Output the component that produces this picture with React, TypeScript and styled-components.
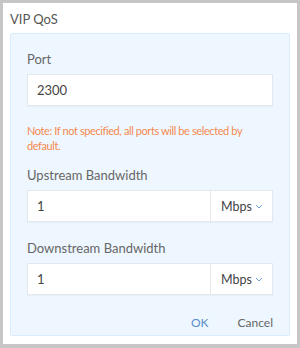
import React from 'react';
import styled, { createGlobalStyle } from 'styled-components';

const Global = createGlobalStyle`
  html, body {
    margin: 0;
    padding: 0;
    background: #c6c6c6;
  }
  body {
    font-family: Lato, "Noto Sans", sans-serif;
  }
`;

const Dialog = styled.div`
  margin: 3px;
  width: 294px;
  height: 341px;
  background: #fff;
  box-sizing: border-box;
  display: flex;
  flex-direction: column;
`;

const Title = styled.div`
  height: 30px;
  padding: 8px 0 0 7px;
  box-sizing: border-box;
  font-size: 13px;
  color: #555;
`;

const Panel = styled.div`
  margin: 0 7px;
  height: 303px;
  box-sizing: border-box;
  border: 1px solid #d9ecfc;
  border-radius: 2px;
  background: #eef7ff;
  padding: 0 16px;
  display: flex;
  flex-direction: column;
`;

const Label = styled.div<{ $top: number }>`
  margin-top: ${p => p.$top}px;
  height: 14px;
  line-height: 14px;
  font-size: 13px;
  color: #666;
`;

const Field = styled.div`
  margin-top: 8px;
  height: 32px;
  box-sizing: border-box;
  display: flex;
  background: #fff;
  border: 1px solid #e4e8ec;
  box-shadow: 0 1px 1px rgba(0, 0, 0, 0.03);
`;

const Value = styled.div`
  flex: 1;
  padding-left: 9px;
  display: flex;
  align-items: center;
  font-size: 13px;
  color: #444;
`;

const Unit = styled.div`
  width: 62px;
  border-left: 1px solid #e4e8ec;
  display: flex;
  align-items: center;
  padding-left: 10px;
  box-sizing: border-box;
  gap: 3px;
  font-size: 12.5px;
  color: #444;
`;

const Note = styled.div`
  margin-top: 17px;
  font-size: 11px;
  letter-spacing: -0.4px;
  line-height: 15px;
  color: #f5894f;
`;

const Actions = styled.div`
  margin-top: auto;
  margin-bottom: 5px;
  display: flex;
  justify-content: flex-end;
  gap: 29px;
  font-size: 12px;
`;

const Action = styled.span<{ $primary?: boolean }>`
  color: ${p => (p.$primary ? '#5a8ec8' : '#666')};
`;

const Chevron = () => (
  <svg width="8" height="5" viewBox="0 0 8 5">
    <path d="M1 1l3 3 3-3" fill="none" stroke="#6a9fd8" strokeWidth="1" />
  </svg>
);

export default function App() {
  return (
    <>
      <Global />
      <Dialog>
        <Title>VIP QoS</Title>
        <Panel>
          <Label $top={18}>Port</Label>
          <Field>
            <Value>2300</Value>
          </Field>
          <Note>Note: If not specified, all ports will be selected by default.</Note>
          <Label $top={15}>Upstream Bandwidth</Label>
          <Field>
            <Value>1</Value>
            <Unit>Mbps <Chevron /></Unit>
          </Field>
          <Label $top={19}>Downstream Bandwidth</Label>
          <Field>
            <Value>1</Value>
            <Unit>Mbps <Chevron /></Unit>
          </Field>
          <Actions>
            <Action $primary>OK</Action>
            <Action>Cancel</Action>
          </Actions>
        </Panel>
      </Dialog>
    </>
  );
}
